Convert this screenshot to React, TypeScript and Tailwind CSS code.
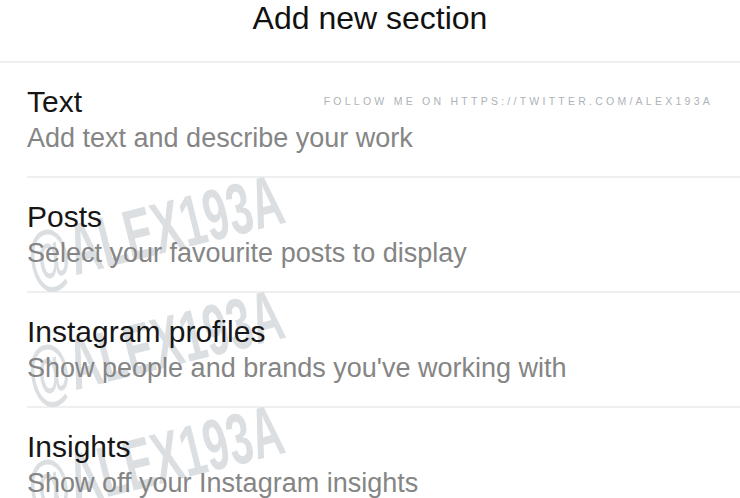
const sections = [
  { title: 'Text', desc: 'Add text and describe your work', mark: false },
  { title: 'Posts', desc: 'Select your favourite posts to display', mark: true },
  { title: 'Instagram profiles', desc: "Show people and brands you've working with", mark: true },
  { title: 'Insights', desc: 'Show off your Instagram insights', mark: true },
]

const Watermark = () => (
  <div className="pointer-events-none absolute left-[10px] top-[46px] origin-bottom-left -rotate-[14deg] scale-x-[0.6] whitespace-nowrap font-['Liberation_Sans',sans-serif] text-[72px] font-bold leading-none text-[#dbdfe2]">
    @ALEX193A
  </div>
)

const App = () => {
  return (
    <div className="h-[498px] w-[740px] overflow-hidden bg-white font-['Liberation_Sans',Arial,sans-serif]">
      <div className="flex h-[63px] justify-center border-b-2 border-[#efefef]">
        <h1 className="text-[32px] leading-[36px] text-[#111]">Add new section</h1>
      </div>
      <div className="pl-[27px]">
        {sections.map((s, i) => (
          <div key={s.title} className="relative h-[115px] border-b-2 border-[#efefef] pt-[25px]">
            {s.mark && <Watermark />}
            {i === 0 && (
              <div className="absolute right-[27px] top-[32px] text-[10.5px] leading-[12px] tracking-[3.25px] text-[#adb2b7]">
                FOLLOW ME ON HTTPS://TWITTER.COM/ALEX193A
              </div>
            )}
            <div className="relative text-[30px] leading-[27px] text-[#161616]">{s.title}</div>
            <div className="relative mt-[10px] text-[27px] leading-[26px] text-[#858585]">{s.desc}</div>
          </div>
        ))}
      </div>
    </div>
  )
}

export default App
